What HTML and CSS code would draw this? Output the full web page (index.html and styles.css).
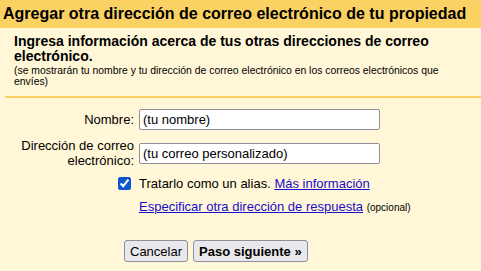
FILE: index.html
```html
<!DOCTYPE html>
<html lang="es">
<head>
  <meta charset="UTF-8" />
  <title>Agregar otra dirección de correo electrónico</title>
  <link rel="stylesheet" href="styles.css">
</head>
<body>
  <h2 class="header">Agregar otra dirección de correo electrónico de tu propiedad</h2>

  <div class="intro">
    <h3>Ingresa información acerca de tus otras direcciones de correo electrónico.</h3>
    <p>(se mostrarán tu nombre y tu dirección de correo electrónico en los correos electrónicos que envíes)</p>
  </div>

  <form class="form" onsubmit="return false">
    <label class="label" for="name">Nombre:</label>
    <input class="field" type="text" id="name" value="(tu nombre)" />

    <label class="label" for="email">Dirección de correo electrónico:</label>
    <input class="field" type="text" id="email" value="(tu correo personalizado)" />

    <div class="check-cell"><input type="checkbox" id="alias" checked /></div>
    <div class="text-cell">
      <label for="alias">Tratarlo como un alias.</label>
      <a href="#">Más información</a>
    </div>

    <div></div>
    <div class="text-cell reply">
      <a href="#">Especificar otra dirección de respuesta</a>
      <span class="optional">(opcional)</span>
    </div>

    <div class="buttons">
      <button type="button">Cancelar</button>
      <button type="submit" class="next">Paso siguiente »</button>
    </div>
  </form>
</body>
</html>
```

FILE: styles.css
```css
* {
  box-sizing: border-box;
  font-family: "Liberation Sans", Arial, sans-serif;
}

body {
  margin: 0;
  background-color: #fff7d7;
  color: #000;
}

.header {
  margin: 0;
  height: 28px;
  padding-left: 3px;
  background-color: #fad163;
  font-size: 16px;
  font-weight: bold;
  line-height: 28px;
  white-space: nowrap;
}

.intro {
  margin-left: 5px;
  padding: 6px 0 9px 9px;
  border-bottom: 2px solid #fad163;
}

.intro h3 {
  margin: 0;
  font-size: 14px;
  line-height: 15px;
  width: 420px;
}

.intro p {
  margin: 1px 0 0;
  font-size: 10.4px;
  line-height: 11px;
  width: 440px;
}

.form {
  display: grid;
  grid-template-columns: 134px 241px;
  column-gap: 5px;
  row-gap: 8px;
  align-items: center;
  padding-top: 11px;
  font-size: 13px;
}

.label {
  text-align: right;
  line-height: 15px;
}

.field {
  height: 21px;
  margin: 0;
  padding: 0 3px;
  border: 1px solid #8f8f9d;
  border-radius: 2px;
  background: #fff;
  font-size: 13px;
}

.check-cell {
  text-align: right;
  height: 15px;
}

.check-cell input {
  width: 13px;
  height: 13px;
  margin: 1px 3px 0 0;
  vertical-align: top;
  accent-color: #0b57d0;
}

.text-cell {
  white-space: nowrap;
  line-height: 15px;
}

a {
  color: #1a0dcc;
}

.optional {
  font-size: 10px;
}

.buttons {
  grid-column: 1 / -1;
  padding: 17px 0 0 124px;
  display: flex;
  gap: 5px;
}

.buttons button {
  height: 22px;
  padding: 0 5px;
  border: 1px solid #8f8f9d;
  border-radius: 3px;
  background-color: #e9e9ed;
  font-size: 13px;
  color: #000;
}

.buttons .next {
  font-weight: bold;
}
```
